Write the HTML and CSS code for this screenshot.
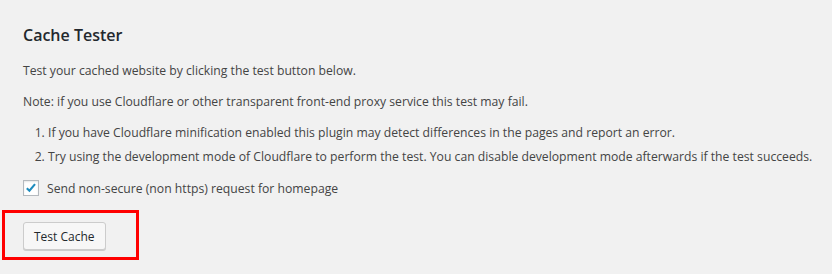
FILE: index.html
```html
<!DOCTYPE html>
<html lang="en">
<head>
  <meta charset="UTF-8" />
  <title>Cache Tester</title>
  <link rel="stylesheet" href="styles.css">
</head>
<body>
  <div class="wrap">
    <h2 class="title">Cache Tester</h2>
    <p>Test your cached website by clicking the test button below.</p>
    <p>Note: if you use Cloudflare or other transparent front-end proxy service this test may fail.</p>
    <ol class="notes">
      <li>If you have Cloudflare minification enabled this plugin may detect differences in the pages and report an error.</li>
      <li>Try using the development mode of Cloudflare to perform the test. You can disable development mode afterwards if the test succeeds.</li>
    </ol>
    <label class="check-row">
      <span class="checkbox">
        <svg viewBox="0 0 16 16" width="16" height="16"><path d="M3.2 8.3l3 2.9 6.4-7.6" fill="none" stroke="#1e8cbe" stroke-width="2.4"/></svg>
      </span>
      Send non-secure (non https) request for homepage
    </label>
    <div class="actions">
      <button class="button">Test Cache</button>
    </div>
    <div class="highlight"></div>
  </div>
</body>
</html>
```

FILE: styles.css
```css
body {
  margin: 0;
  background: #f1f1f1;
  color: #444;
  font-family: "Open Sans", "Noto Sans", sans-serif;
  font-size: 12.2px;
}
.wrap {
  position: relative;
  padding: 24px 5px 20px 23px;
}
.title {
  margin: 0 0 16px;
  font-size: 16px;
  line-height: 22px;
  font-weight: 600;
  color: #23282d;
}
p {
  margin: 0 0 13px;
  line-height: 18px;
}
.notes {
  margin: 0 0 13px;
  padding-left: 25px;
}
.notes li {
  line-height: 18px;
  margin-bottom: 6px;
}
.notes li:last-child {
  margin-bottom: 0;
}
.check-row {
  display: flex;
  align-items: center;
  gap: 8px;
  height: 18px;
}
.checkbox {
  width: 16px;
  height: 16px;
  box-sizing: border-box;
  border: 1px solid #b4b9be;
  background: #fff;
  box-shadow: inset 0 1px 2px rgba(0,0,0,0.1);
  display: flex;
  align-items: center;
  justify-content: center;
}
.checkbox svg {
  display: block;
  width: 14px;
  height: 14px;
}
.actions {
  margin-top: 25px;
}
.button {
  height: 28px;
  padding: 0 10px;
  font-family: inherit;
  font-size: 12px;
  color: #23282d;
  background: #f7f7f7;
  border: 1px solid #ccc;
  border-radius: 3px;
  box-shadow: 0 1px 0 #ccc;
  cursor: pointer;
}
.highlight {
  position: absolute;
  left: 2px;
  top: 210px;
  width: 131px;
  height: 44px;
  border: 3px solid #f00;
}
```
